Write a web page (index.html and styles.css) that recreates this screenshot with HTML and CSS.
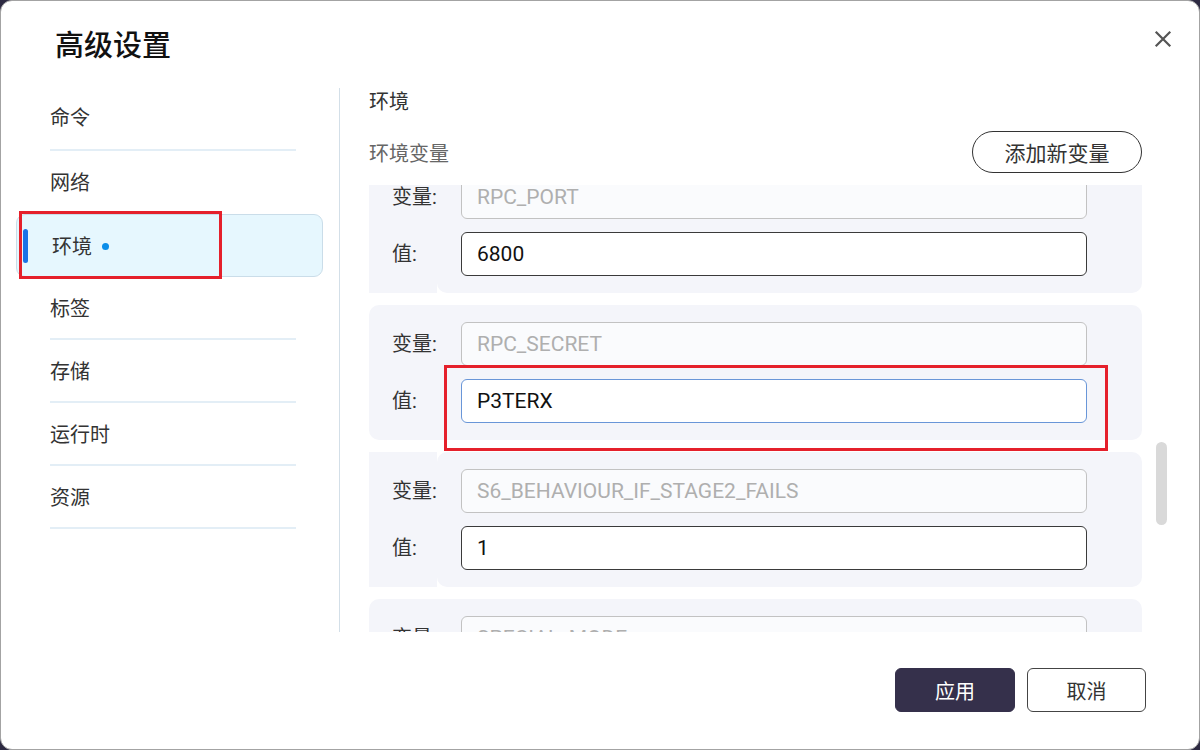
FILE: index.html
```html
<!DOCTYPE html>
<html lang="zh-CN">
<head>
<meta charset="utf-8">
<title>高级设置</title>
<link rel="stylesheet" href="styles.css">
</head>
<body>
<div class="dialog">
  <div class="header">
    <div class="title">高级设置</div>
    <button class="close" aria-label="关闭">
      <svg width="20" height="20" viewBox="0 0 20 20"><path d="M3.5 3.5 L16.5 16.5 M16.5 3.5 L3.5 16.5" stroke="#555" stroke-width="2.2" stroke-linecap="square" fill="none"/></svg>
    </button>
  </div>
  <div class="body">
    <div class="sidebar">
      <div class="item">命令</div>
      <div class="item pre">网络</div>
      <div class="item active"><span class="bar"></span>环境<span class="dot"></span></div>
      <div class="item">标签</div>
      <div class="item">存储</div>
      <div class="item">运行时</div>
      <div class="item">资源</div>
    </div>
    <div class="divider"></div>
    <div class="main">
      <div class="section">环境</div>
      <div class="subrow">
        <div class="subtitle">环境变量</div>
        <button class="add">添加新变量</button>
      </div>
      <div class="scroll">
        <div class="list">
          <div class="card split">
            <div class="labels"><div class="lab">变量:</div><div class="lab">值:</div></div>
            <div class="fields"><div class="inp dis">RPC_PORT</div><div class="inp">6800</div></div>
          </div>
          <div class="card">
            <div class="labels"><div class="lab">变量:</div><div class="lab">值:</div></div>
            <div class="fields"><div class="inp dis">RPC_SECRET</div><div class="inp focus">P3TERX</div></div>
          </div>
          <div class="card split">
            <div class="labels"><div class="lab">变量:</div><div class="lab">值:</div></div>
            <div class="fields"><div class="inp dis">S6_BEHAVIOUR_IF_STAGE2_FAILS</div><div class="inp">1</div></div>
          </div>
          <div class="card">
            <div class="labels"><div class="lab">变量:</div><div class="lab">值:</div></div>
            <div class="fields"><div class="inp dis">SPECIAL_MODE</div><div class="inp"></div></div>
          </div>
        </div>
        <div class="track"><div class="thumb"></div></div>
      </div>
    </div>
  </div>
  <div class="footer">
    <button class="btn primary">应用</button>
    <button class="btn">取消</button>
  </div>
  <div class="mark mark1"></div>
  <div class="mark mark2"></div>
</div>
</body>
</html>
```
FILE: styles.css
```css
* { box-sizing: border-box; }
html, body { margin: 0; padding: 0; }
body {
  background: #2d2a42;
  font-family: Roboto, "Noto Sans CJK SC", "Noto Sans", sans-serif;
  color: #333;
  width: 1200px;
  height: 750px;
  overflow: hidden;
}
button { font-family: inherit; cursor: pointer; }
.dialog {
  position: relative;
  width: 1200px;
  height: 750px;
  background: #fff;
  border: 1px solid #a3a3a3;
  border-radius: 12px;
  display: flex;
  flex-direction: column;
  overflow: hidden;
}
.header {
  height: 87px;
  flex: none;
  display: flex;
  align-items: flex-start;
  padding: 28px 26px 0 54px;
}
.title {
  font-size: 29px;
  line-height: 29px;
  font-weight: 500;
  color: #111;
  font-family: "Noto Sans CJK SC", sans-serif;
}
.close {
  margin-left: auto;
  margin-top: 0;
  width: 20px;
  height: 20px;
  padding: 0;
  border: 0;
  background: none;
  display: flex;
}
.body {
  height: 544px;
  flex: none;
  display: flex;
  padding-left: 15px;
}
.sidebar {
  width: 307px;
  flex: none;
  display: flex;
  flex-direction: column;
}
.item {
  height: 63px;
  margin: 0 27px 0 34px;
  border-bottom: 2px solid #e3eef6;
  font-size: 20px;
  line-height: 61px;
  color: #333;
  font-family: "Noto Sans CJK SC", sans-serif;
}
.item:first-child { line-height: 57px; }
.item.pre { border-bottom-color: transparent; }
.item.active {
  margin: 0;
  padding-left: 35px;
  border: 1px solid #cadde9;
  border-radius: 9px;
  background: #e6f7fe;
  display: flex;
  align-items: center;
  line-height: 1;
  position: relative;
}
.bar {
  position: absolute;
  left: 6px;
  top: 14px;
  width: 5px;
  height: 34px;
  border-radius: 3px;
  background: #1a72e6;
}
.dot {
  width: 7px;
  height: 7px;
  border-radius: 50%;
  background: #0b8ee9;
  margin-left: 10px;
  margin-top: 1px;
}
.divider {
  width: 1px;
  background: #d3dfe8;
  margin-left: 16px;
  flex: none;
}
.main {
  margin-left: 29px;
  width: 800px;
  display: flex;
  flex-direction: column;
}
.section {
  width: 773px;
  font-size: 20px;
  line-height: 26px;
  color: #333;
  font-family: "Noto Sans CJK SC", sans-serif;
}
.subrow {
  width: 773px;
  margin-top: 17px;
  height: 42px;
  display: flex;
  align-items: center;
}
.subtitle {
  font-size: 20px;
  color: #666;
  font-family: "Noto Sans CJK SC", sans-serif;
}
.add {
  margin-left: auto;
  width: 170px;
  height: 42px;
  border: 1px solid #333;
  border-radius: 21px;
  background: #fff;
  font-size: 21px;
  color: #333;
  padding: 0;
}
.scroll {
  margin-top: 12px;
  height: 447px;
  display: flex;
}
.list {
  width: 773px;
  height: 447px;
  overflow: hidden;
  flex: none;
}
.card {
  margin-top: -27px;
  margin-bottom: 12px;
  height: 135px;
  display: flex;
  border-radius: 10px;
  background: #f4f5fa;
}
.card + .card { margin-top: 0; }
.card.split { background: transparent; }
.card.split .labels { background: #f4f5fa; }
.card.split .fields { background: #f4f5fa; border-radius: 10px; }
.labels {
  width: 68px;
  flex: none;
  padding: 17px 0 17px 23px;
  display: flex;
  flex-direction: column;
  gap: 13px;
}
.lab {
  height: 44px;
  line-height: 44px;
  font-size: 20px;
  color: #333;
  white-space: nowrap;
}
.fields {
  flex: 1;
  padding: 17px 55px 17px 24px;
  display: flex;
  flex-direction: column;
  gap: 13px;
}
.inp {
  height: 44px;
  border: 1px solid #3a3a3a;
  border-radius: 6px;
  background: #fff;
  padding-left: 15px;
  font-size: 21px;
  line-height: 42px;
  color: #111;
  white-space: nowrap;
  overflow: hidden;
}
.inp.dis {
  border-color: #c2c2c2;
  background: #fafbfd;
  color: #afafaf;
}
.inp.focus { border-color: #6996d8; }
.track {
  margin-left: 14px;
  width: 11px;
  flex: none;
}
.thumb {
  margin-top: 257px;
  height: 83px;
  border-radius: 6px;
  background: #d9d9d9;
}
.footer {
  flex: 1;
  display: flex;
  justify-content: flex-end;
  align-items: flex-start;
  gap: 12px;
  padding: 36px 53px 0 0;
}
.btn {
  width: 119px;
  height: 44px;
  border: 1px solid #444;
  border-radius: 6px;
  background: #fff;
  font-size: 20px;
  color: #333;
  padding: 0;
}
.btn.primary {
  width: 120px;
  background: #35304b;
  border-color: #35304b;
  color: #fff;
}
.mark {
  position: absolute;
  border: 3px solid #e5202b;
  pointer-events: none;
}
.mark1 { left: 18px; top: 210px; width: 203px; height: 68px; }
.mark2 { left: 443px; top: 364px; width: 664px; height: 86px; }
```
